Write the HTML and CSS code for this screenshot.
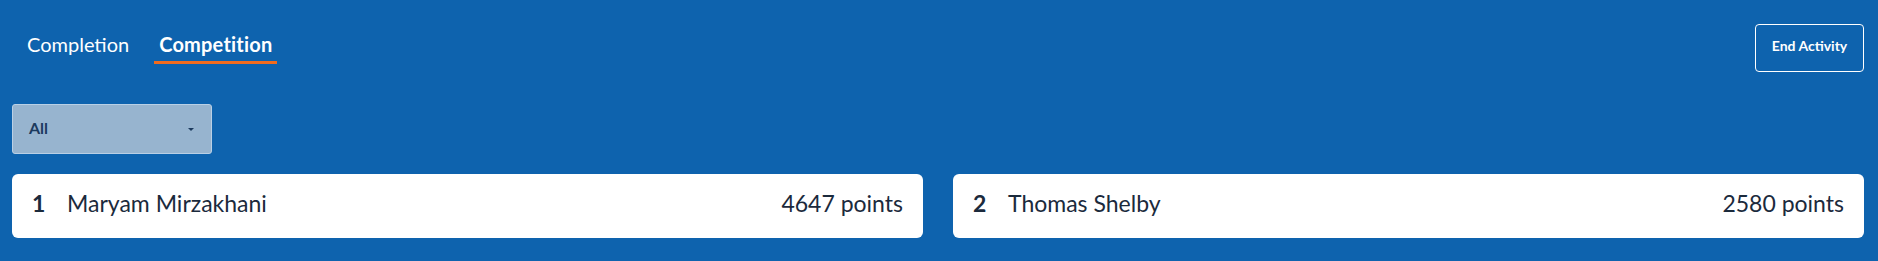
FILE: index.html
```html
<!DOCTYPE html>
<html>
<head>
<meta charset="utf-8">
<link rel="stylesheet" href="styles.css">
</head>
<body>
<div class="page">
  <div class="topbar">
    <nav class="tabs">
      <div class="tab">Completion</div>
      <div class="tab active">Competition</div>
    </nav>
    <button class="end-btn">End Activity</button>
  </div>
  <div class="filter-row">
    <div class="select">
      <span class="select-label">All</span>
      <span class="caret"></span>
    </div>
  </div>
  <div class="board">
    <div class="card">
      <span class="rank">1</span>
      <span class="name">Maryam Mirzakhani</span>
      <span class="points">4647 points</span>
    </div>
    <div class="card">
      <span class="rank">2</span>
      <span class="name">Thomas Shelby</span>
      <span class="points">2580 points</span>
    </div>
  </div>
</div>
</body>
</html>
```

FILE: styles.css
```css
html, body {
  margin: 0;
  padding: 0;
}
body {
  background: #0e63ae;
  font-family: Lato, "Open Sans", sans-serif;
  color: #ffffff;
}
.page {
  height: 261px;
  padding: 0 14px 0 12px;
  box-sizing: border-box;
}
.topbar {
  display: flex;
  justify-content: space-between;
  align-items: flex-start;
  height: 104px;
}
.tabs {
  display: flex;
  gap: 20px;
  padding-left: 10px;
  padding-top: 32px;
}
.tab {
  font-size: 20px;
  line-height: 24px;
  padding: 0 5px 5px;
  border-bottom: 3px solid transparent;
  color: #ffffff;
}
.tab.active {
  font-weight: 700;
  letter-spacing: 0.2px;
  border-bottom-color: #f26b1d;
}
.end-btn {
  margin-top: 24px;
  width: 109px;
  height: 48px;
  background: transparent;
  border: 1px solid #ffffff;
  border-radius: 4px;
  color: #ffffff;
  font-family: Lato, sans-serif;
  font-weight: 700;
  font-size: 14px;
  padding: 0 0 5px 0;
}
.filter-row {
  height: 70px;
}
.select {
  width: 200px;
  height: 50px;
  box-sizing: border-box;
  background: #97b4cf;
  border: 1px solid #b9d0e6;
  border-radius: 3px;
  display: flex;
  align-items: center;
  justify-content: space-between;
  padding: 0 17px 4px 16px;
}
.select-label {
  font-size: 16px;
  font-weight: 700;
  color: #1c3a5e;
}
.caret {
  width: 0;
  height: 0;
  margin-top: 4px;
  border-left: 3.5px solid transparent;
  border-right: 3.5px solid transparent;
  border-top: 3.5px solid #1c3a5e;
}
.board {
  display: grid;
  grid-template-columns: 1fr 1fr;
  gap: 30px;
}
.card {
  background: #ffffff;
  border-radius: 6px;
  height: 64px;
  box-sizing: border-box;
  display: flex;
  align-items: center;
  padding: 0 20px 6px 20px;
  color: #1b2a3c;
  font-size: 23px;
}
.rank {
  font-weight: 700;
  width: 35px;
}
.name {
  flex: 1;
}
.points {
  text-align: right;
}
```
